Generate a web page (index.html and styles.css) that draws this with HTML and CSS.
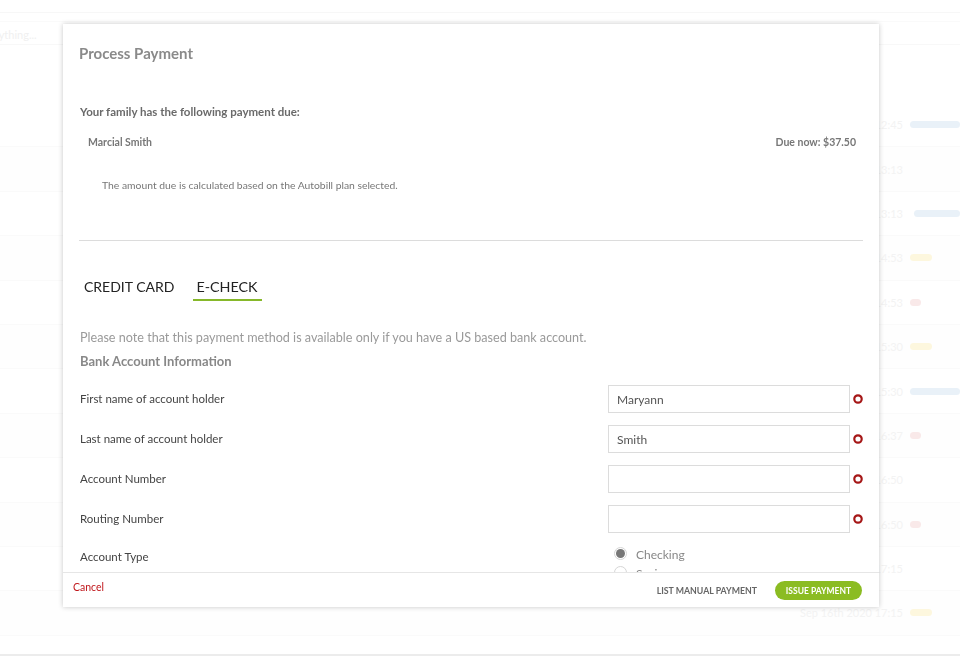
FILE: index.html
```html
<!DOCTYPE html>
<html>
<head>
<meta charset="utf-8">
<link rel="stylesheet" href="styles.css">
</head>
<body>
<div class="page">
  <div class="topline"></div>
  <div class="search"><span class="search-text">Search anything...</span></div>
  <div class="table">
    <div class="trow"><span class="cell-date">Sep 16th 2020 12:45</span><span class="bar blue"></span></div>
    <div class="trow alt"><span class="cell-date">Sep 16th 2020 13:13</span></div>
    <div class="trow"><span class="cell-date">Sep 16th 2020 13:13</span><span class="bar blue shift"></span></div>
    <div class="trow alt"><span class="cell-date">Sep 16th 2020 14:53</span><span class="bar yellow"></span></div>
    <div class="trow"><span class="cell-date">Sep 16th 2020 14:53</span><span class="bar red"></span></div>
    <div class="trow alt"><span class="cell-date">Sep 16th 2020 15:30</span><span class="bar yellow"></span></div>
    <div class="trow"><span class="cell-date">Sep 16th 2020 15:30</span><span class="bar blue"></span></div>
    <div class="trow alt"><span class="cell-date">Sep 16th 2020 16:37</span><span class="bar red"></span></div>
    <div class="trow"><span class="cell-date">Sep 16th 2020 16:50</span></div>
    <div class="trow alt"><span class="cell-date">Sep 16th 2020 16:50</span><span class="bar red"></span></div>
    <div class="trow"><span class="cell-date">Sep 16th 2020 17:15</span></div>
    <div class="trow alt"><span class="cell-date">Sep 16th 2020 17:15</span><span class="bar yellow"></span></div>
  </div>
  <div class="bottomline"></div>
</div>

<div class="overlay">
  <div class="modal">
    <div class="modal-body">
      <h1 class="title">Process Payment</h1>
      <p class="due-head">Your family has the following payment due:</p>
      <div class="due-row">
        <span>Marcial Smith</span>
        <span>Due now: $37.50</span>
      </div>
      <p class="due-note">The amount due is calculated based on the Autobill plan selected.</p>
      <div class="divider"></div>
      <div class="tabs">
        <span class="tab">CREDIT CARD</span>
        <span class="tab active">E-CHECK</span>
      </div>
      <p class="notice">Please note that this payment method is available only if you have a US based bank account.</p>
      <h2 class="section">Bank Account Information</h2>
      <div class="form">
        <div class="frow">
          <label class="flabel">First name of account holder</label>
          <div class="fctl"><div class="input">Maryann</div><svg class="req" width="10" height="10" viewBox="0 0 10 10"><circle cx="5" cy="5" r="3.7" fill="none" stroke="#a51616" stroke-width="2.2"/></svg></div>
        </div>
        <div class="frow">
          <label class="flabel">Last name of account holder</label>
          <div class="fctl"><div class="input">Smith</div><svg class="req" width="10" height="10" viewBox="0 0 10 10"><circle cx="5" cy="5" r="3.7" fill="none" stroke="#a51616" stroke-width="2.2"/></svg></div>
        </div>
        <div class="frow">
          <label class="flabel">Account Number</label>
          <div class="fctl"><div class="input"></div><svg class="req" width="10" height="10" viewBox="0 0 10 10"><circle cx="5" cy="5" r="3.7" fill="none" stroke="#a51616" stroke-width="2.2"/></svg></div>
        </div>
        <div class="frow">
          <label class="flabel">Routing Number</label>
          <div class="fctl"><div class="input"></div><svg class="req" width="10" height="10" viewBox="0 0 10 10"><circle cx="5" cy="5" r="3.7" fill="none" stroke="#a51616" stroke-width="2.2"/></svg></div>
        </div>
        <div class="frow type-row">
          <label class="flabel">Account Type</label>
          <div class="radios">
            <div class="radio-line"><span class="radio checked"></span><span>Checking</span></div>
            <div class="radio-line"><span class="radio"></span><span>Savings</span></div>
          </div>
        </div>
      </div>
    </div>
    <div class="modal-footer">
      <span class="cancel">Cancel</span>
      <div class="actions">
        <span class="link-btn">LIST MANUAL PAYMENT</span>
        <span class="primary-btn">ISSUE PAYMENT</span>
      </div>
    </div>
  </div>
</div>
</body>
</html>
```

FILE: styles.css
```css
* { box-sizing: border-box; }
html, body {
  margin: 0;
  padding: 0;
  width: 960px;
  height: 656px;
  overflow: hidden;
  background: #fff;
  font-family: Lato, "Open Sans", sans-serif;
}

/* faded background page */
.page {
  width: 960px;
  height: 656px;
  display: flex;
  flex-direction: column;
}
.topline {
  margin-top: 12px;
  height: 1px;
  background: #f7f7f7;
}
.search {
  margin-top: 8px;
  height: 24px;
  border-top: 1px solid #fafafa;
  border-bottom: 1px solid #f8f8f8;
  display: flex;
  align-items: flex-end;
  padding-bottom: 3px;
}
.search-text {
  margin-left: -48px;
  font-size: 11px;
  color: #f0f0f0;
}
.table {
  margin-top: 58px;
  display: flex;
  flex-direction: column;
}
.trow {
  height: 44.4px;
  border-bottom: 1px solid #fafafa;
  display: flex;
  align-items: center;
  padding-left: 800px;
  gap: 14px;
}
.trow.alt { background: #fefefe; }
.cell-date {
  font-size: 11px;
  color: #f3f3f3;
  width: 96px;
  text-align: right;
  white-space: nowrap;
}
.bar {
  height: 7px;
  border-radius: 4px;
}
.bar.blue { width: 70px; background: #e9f1f8; }
.bar.blue.shift { margin-left: 4px; }
.bar.yellow { width: 22px; background: #fdf7de; }
.bar.red { width: 11px; background: #f9e9e9; }
.bottomline {
  margin-top: auto;
  height: 2px;
  background: #ececec;
}

/* overlay + modal */
.overlay {
  position: fixed;
  inset: 0;
  padding: 24px 0 0 63px;
}
.modal {
  width: 816px;
  height: 583px;
  background: #fff;
  box-shadow: 0 0 5px rgba(0, 0, 0, 0.22);
  display: flex;
  flex-direction: column;
}
.modal-body {
  flex: 1;
  overflow: hidden;
  padding: 19px 16px 0 16px;
}
.title {
  margin: 0;
  font-size: 15px;
  line-height: 20px;
  font-weight: 700;
  color: #8a8a8a;
}
.due-head {
  margin: 41px 0 0 1px;
  font-size: 11.5px;
  line-height: 16px;
  font-weight: 700;
  color: #6a6a6a;
}
.due-row {
  margin-top: 15px;
  padding: 0 7px 0 9px;
  display: flex;
  justify-content: space-between;
  font-size: 10.5px;
  line-height: 14px;
  font-weight: 700;
  color: #777;
}
.due-note {
  margin: 29px 0 0 23px;
  font-size: 10.35px;
  line-height: 14px;
  color: #777;
}
.divider {
  margin-top: 48px;
  height: 1px;
  background: #dcdcdc;
}
.tabs {
  margin-top: 37px;
  display: flex;
  gap: 16px;
  padding-left: 2px;
}
.tab {
  font-size: 14px;
  line-height: 18px;
  color: #222;
  padding: 0 3px 3px 3px;
  border-bottom: 2px solid transparent;
}
.tab.active { border-bottom-color: #86b82a; font-size: 14.3px; padding: 0 4px 3px 3px; }
.notice {
  margin: 28px 0 0 1px;
  font-size: 12.6px;
  line-height: 18px;
  color: #9a9a9a;
}
.section {
  margin: 6px 0 0 1px;
  font-size: 13px;
  line-height: 16px;
  font-weight: 700;
  color: #888;
}
.form {
  margin-top: 16px;
  display: flex;
  flex-direction: column;
  gap: 12px;
}
.frow {
  height: 28px;
  display: flex;
  align-items: center;
  justify-content: space-between;
}
.flabel {
  padding-left: 1px;
  font-size: 11.5px;
  line-height: 14px;
  color: #444;
}
.fctl {
  display: flex;
  align-items: center;
  gap: 3px;
}
.input {
  width: 242px;
  height: 28px;
  border: 1px solid #dcdcdc;
  padding: 0 8px;
  display: flex;
  align-items: center;
  font-size: 12px;
  color: #555;
}
.req { display: block; }
.type-row { align-items: flex-start; }
.type-row .flabel { margin-top: 5px; }
.radios {
  width: 255px;
  display: flex;
  flex-direction: column;
  gap: 5px;
  padding-left: 6px;
  padding-top: 3px;
}
.radio-line {
  display: flex;
  align-items: center;
  gap: 9px;
  font-size: 12px;
  line-height: 14px;
  color: #888;
}
.radio {
  width: 13px;
  height: 13px;
  border-radius: 50%;
  border: 1px solid #d6d6d6;
  background: #fff;
  margin-top: -3px;
  display: flex;
  align-items: center;
  justify-content: center;
}
.radio.checked::after {
  content: "";
  width: 9px;
  height: 9px;
  border-radius: 50%;
  background: #777;
}
.modal-footer {
  height: 35px;
  border-top: 1px solid #e6e6e6;
  display: flex;
  align-items: center;
  justify-content: space-between;
  padding: 0 17px 0 10px;
}
.cancel {
  font-size: 10.5px;
  color: #c0171c;
  margin-top: -6px;
}
.actions {
  display: flex;
  align-items: center;
  gap: 18px;
  margin-top: 1px;
}
.link-btn {
  font-size: 8.75px;
  font-weight: 700;
  color: #666;
}
.primary-btn {
  width: 87px;
  height: 19px;
  border-radius: 10px;
  background: #8bbc22;
  color: #fff;
  font-size: 8.5px;
  font-weight: 700;
  display: flex;
  align-items: center;
  justify-content: center;
}
```
